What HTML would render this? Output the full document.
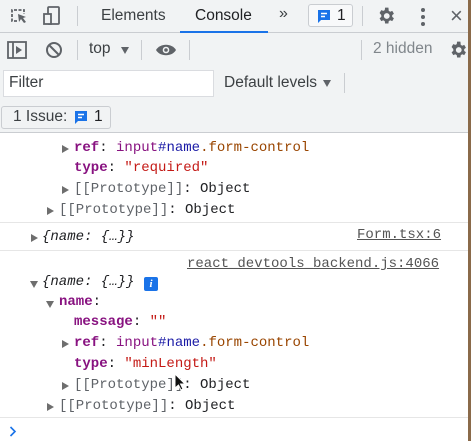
<!DOCTYPE html>
<html><head><style>
*{margin:0;padding:0;box-sizing:border-box}
body{width:471px;height:441px;overflow:hidden;background:#fff;font-family:"Liberation Sans",sans-serif;position:relative}
.a{position:absolute;white-space:pre}
.bar{position:absolute;left:0;width:471px;background:#f1f3f4}
.m{font-family:"Liberation Mono",monospace;font-size:14px;color:#202124;margin-top:1px}
.k{color:#881280;font-weight:bold}
.s{color:#c41a16}
.t{color:#881280}
.b{color:#1a1aa6}
.tri{position:absolute;width:0;height:0;border-top:4px solid transparent;border-bottom:4px solid transparent;border-left:7px solid #6e6e6e;margin-top:1px}
.trd{position:absolute;width:0;height:0;border-left:4px solid transparent;border-right:4px solid transparent;border-top:7px solid #6e6e6e;margin-top:1px}
.hl{position:absolute;left:0;width:468px;height:1px;background:#e6e6e6}
.ui{font-size:15.5px;color:#3c4043}
</style></head><body>
<div class="bar" style="top:0;height:33px;border-bottom:1px solid #cacdd1"></div>
<div class="bar" style="top:33px;height:100px;border-bottom:1px solid #cacdd1"></div>
<div style="position:absolute;right:0;top:0;width:3px;height:441px;background:#8a6a4a"></div>
<svg class="a" style="left:9px;top:6px" width="20" height="20" viewBox="0 0 20 20"><path d="M8 15H3V4h12v4" fill="none" stroke="#5f6368" stroke-width="1.8" stroke-dasharray="3 1.5"/><path d="M9 8l8 3-3 1 3 4-2 1-3-4-2 3z" fill="#5f6368"/></svg>
<svg class="a" style="left:42px;top:5px" width="22" height="22" viewBox="0 0 22 22"><rect x="6" y="2" width="11" height="17" rx="1" fill="none" stroke="#5f6368" stroke-width="1.8"/><rect x="2" y="9" width="7" height="10" fill="#f1f3f4" stroke="#5f6368" stroke-width="1.8"/></svg>
<div class="a" style="left:77px;top:6px;width:1px;height:20px;background:#cacdd1"></div>
<div class="a ui" style="left:101px;top:7px">Elements</div>
<div class="a ui" style="left:195px;top:7px;color:#202124">Console</div>
<div class="a" style="left:180px;top:31px;width:88px;height:2px;background:#1a73e8"></div>
<div class="a ui" style="left:279px;top:5px;font-size:16px">»</div>
<div class="a" style="left:308px;top:4px;width:45px;height:23px;border:1px solid #cacdd1;border-radius:3px;background:#f8f9fa"></div>
<svg class="a" style="left:317px;top:9px" width="14" height="15" viewBox="0 0 14 15"><path d="M1 1h12v10H4l-3 3z" fill="#1a73e8"/><path d="M4 4.5h6M4 7.5h4" stroke="#fff" stroke-width="1.4"/></svg>
<div class="a ui" style="left:337px;top:7px;color:#202124">1</div>
<div class="a" style="left:362px;top:6px;width:1px;height:20px;background:#cacdd1"></div>
<svg class="a" style="left:376px;top:6px" width="20" height="20" viewBox="0 0 24 24"><path fill="#5f6368" d="M19.4 13c.04-.3.06-.65.06-1s-.02-.7-.06-1l2.1-1.65-2-3.46-2.5 1a7.3 7.3 0 0 0-1.7-1L14.9 2h-4l-.4 2.9c-.6.25-1.2.6-1.7 1l-2.5-1-2 3.46L6.4 11c-.04.3-.06.66-.06 1s.02.7.06 1l-2.1 1.65 2 3.46 2.5-1c.5.4 1.1.75 1.7 1l.4 2.9h4l.4-2.9c.6-.25 1.2-.6 1.7-1l2.5 1 2-3.46zM12.9 15.5a3.5 3.5 0 1 1 0-7 3.5 3.5 0 0 1 0 7z"/></svg>
<div class="a" style="left:421px;top:8px;width:4px;height:4px;border-radius:2px;background:#5f6368;box-shadow:0 7px 0 #5f6368,0 14px 0 #5f6368"></div>
<div class="a" style="left:450px;top:3px;font-size:22px;color:#5f6368">×</div>
<svg class="a" style="left:7px;top:41px" width="20" height="18" viewBox="0 0 20 18"><rect x="1" y="1" width="18" height="16" fill="none" stroke="#5f6368" stroke-width="1.8"/><path d="M6 1v16" stroke="#5f6368" stroke-width="1.8"/><path d="M9 5l6 4-6 4z" fill="#5f6368"/></svg>
<svg class="a" style="left:45px;top:41px" width="18" height="18" viewBox="0 0 18 18"><circle cx="9" cy="9" r="7" fill="none" stroke="#5f6368" stroke-width="2"/><path d="M4 4l10 10" stroke="#5f6368" stroke-width="2"/></svg>
<div class="a" style="left:77px;top:40px;width:1px;height:20px;background:#cacdd1"></div>
<div class="a ui" style="left:89px;top:40px">top</div>
<div class="trd" style="left:121px;top:46px;border-top-color:#5f6368"></div>
<div class="a" style="left:141px;top:40px;width:1px;height:20px;background:#cacdd1"></div>
<svg class="a" style="left:155px;top:43px" width="22" height="14" viewBox="0 0 22 14"><path d="M1 7C5 0 17 0 21 7 17 14 5 14 1 7z" fill="#5f6368"/><circle cx="11" cy="7" r="3.3" fill="#f1f3f4"/><circle cx="11" cy="7" r="1.8" fill="#5f6368"/></svg>
<div class="a" style="left:189px;top:40px;width:1px;height:20px;background:#cacdd1"></div>
<div class="a" style="left:361px;top:40px;width:1px;height:20px;background:#cacdd1"></div>
<div class="a ui" style="left:373px;top:40px;color:#80868b">2 hidden</div>
<svg class="a" style="left:448px;top:40px" width="20" height="20" viewBox="0 0 24 24"><path fill="#5f6368" d="M19.4 13c.04-.3.06-.65.06-1s-.02-.7-.06-1l2.1-1.65-2-3.46-2.5 1a7.3 7.3 0 0 0-1.7-1L14.9 2h-4l-.4 2.9c-.6.25-1.2.6-1.7 1l-2.5-1-2 3.46L6.4 11c-.04.3-.06.66-.06 1s.02.7.06 1l-2.1 1.65 2 3.46 2.5-1c.5.4 1.1.75 1.7 1l.4 2.9h4l.4-2.9c.6-.25 1.2-.6 1.7-1l2.5 1 2-3.46zM12.9 15.5a3.5 3.5 0 1 1 0-7 3.5 3.5 0 0 1 0 7z"/></svg>
<div class="a" style="left:3px;top:70px;width:211px;height:27px;background:#fff;border:1px solid #dadce0"></div>
<div class="a ui" style="left:9px;top:74px;color:#3c4043">Filter</div>
<div class="a ui" style="left:224px;top:74px">Default levels</div>
<div class="trd" style="left:323px;top:79px;border-top-color:#5f6368"></div>
<div class="a" style="left:344px;top:73px;width:1px;height:20px;background:#cacdd1"></div>
<div class="a" style="left:1px;top:106px;width:110px;height:23px;border:1px solid #cacdd1;border-radius:3px;background:#f1f3f4"></div>
<div class="a ui" style="left:13px;top:108px">1 Issue:</div>
<svg class="a" style="left:74px;top:110px" width="14" height="15" viewBox="0 0 14 15"><path d="M1 1h12v10H4l-3 3z" fill="#1a73e8"/><path d="M4 4.5h6M4 7.5h4" stroke="#fff" stroke-width="1.4"/></svg>
<div class="a ui" style="left:94px;top:108px;color:#202124">1</div>
<div class="tri" style="left:62px;top:144px"></div>
<div class="a m" style="left:74px;top:139px"><span class="k">ref</span>: <span class="t">input</span><span class="b">#name</span><span style="color:#994500">.form-control</span></div>
<div class="a m" style="left:74px;top:159px"><span class="k">type</span>: <span class="s">"required"</span></div>
<div class="tri" style="left:62px;top:185px"></div>
<div class="a m" style="left:74px;top:180px"><span style="color:#5f6368">[[Prototype]]</span>: Object</div>
<div class="tri" style="left:47px;top:206px"></div>
<div class="a m" style="left:59px;top:201px"><span style="color:#5f6368">[[Prototype]]</span>: Object</div>
<div class="hl" style="top:222px"></div>
<div class="tri" style="left:31px;top:233px"></div>
<div class="a m" style="left:42px;top:228px;font-style:italic">{name: {…}}</div>
<div class="a m" style="left:357px;top:226px;color:#545454;text-decoration:underline">Form.tsx:6</div>
<div class="hl" style="top:250px"></div>
<div class="a m" style="left:187px;top:255px;color:#545454;text-decoration:underline">react_devtools_backend.js:4066</div>
<div class="trd" style="left:30px;top:280px"></div>
<div class="a m" style="left:42px;top:273px;font-style:italic">{name: {…}}</div>
<div class="a" style="left:144px;top:277px;width:14px;height:14px;border-radius:2px;background:#1a73e8;color:#fff;font:bold italic 11px 'Liberation Serif',serif;text-align:center;line-height:14px">i</div>
<div class="trd" style="left:46px;top:300px"></div>
<div class="a m" style="left:59px;top:293px"><span class="k">name</span>:</div>
<div class="a m" style="left:74px;top:313px"><span class="k">message</span>: <span class="s">""</span></div>
<div class="tri" style="left:62px;top:339px"></div>
<div class="a m" style="left:74px;top:334px"><span class="k">ref</span>: <span class="t">input</span><span class="b">#name</span><span style="color:#994500">.form-control</span></div>
<div class="a m" style="left:74px;top:355px"><span class="k">type</span>: <span class="s">"minLength"</span></div>
<div class="tri" style="left:62px;top:381px"></div>
<div class="a m" style="left:74px;top:376px"><span style="color:#5f6368">[[Prototype]]</span>: Object</div>
<div class="tri" style="left:47px;top:402px"></div>
<div class="a m" style="left:59px;top:397px"><span style="color:#5f6368">[[Prototype]]</span>: Object</div>
<svg class="a" style="left:174px;top:373px" width="12" height="18" viewBox="0 0 12 18"><path d="M1 1v14l3.5-3 2.5 5 2-1-2.5-5H11z" fill="#111" stroke="#fff" stroke-width="1"/></svg>
<div class="hl" style="top:417px"></div>
<svg class="a" style="left:9px;top:426px" width="8" height="11" viewBox="0 0 8 11"><path d="M1.5 1l4.5 4.5-4.5 4.5" fill="none" stroke="#1a73e8" stroke-width="1.6"/></svg>
</body></html>
